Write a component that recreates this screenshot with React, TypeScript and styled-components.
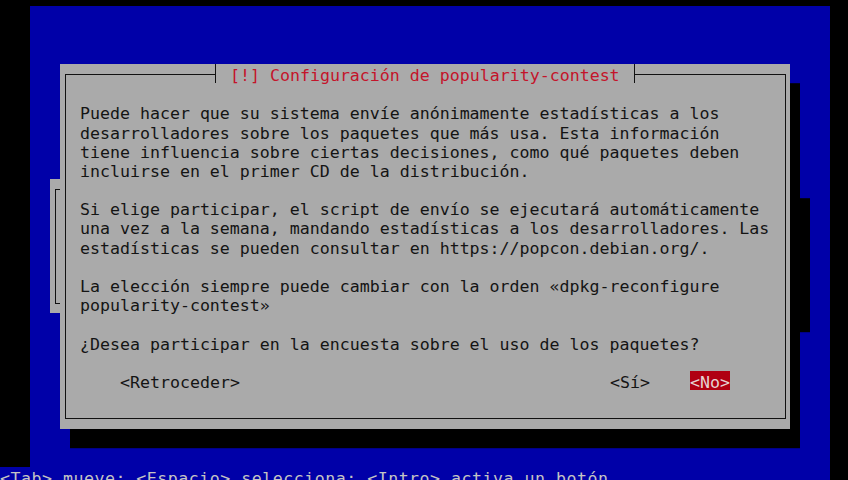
import React from "react";
import styled, { createGlobalStyle } from "styled-components";

const CELL_W = 10;
const CELL_H = 19.2;

const Global = createGlobalStyle`
  html, body {
    margin: 0;
    padding: 0;
    width: 848px;
    height: 480px;
    overflow: hidden;
    background: #000;
  }
`;

const Screen = styled.main`
  margin: 6.4px 0 0 30px;
  width: ${80 * CELL_W}px;
  display: grid;
  grid-template-columns: repeat(80, ${CELL_W}px);
  grid-template-rows: repeat(25, ${CELL_H}px);
  background: #0000a8;
  font-family: "DejaVu Sans Mono", "Liberation Mono", monospace;
  font-size: 16.6px;
  line-height: 23px;
  white-space: pre;
`;

const BackWindow = styled.section`
  grid-column: 3 / 78;
  grid-row: 10 / 17;
  background: #aaaaaa;
  box-shadow: ${CELL_W}px ${CELL_H}px 0 #000;
  padding: ${CELL_H / 2}px 0 ${CELL_H / 2}px 4.5px;
  box-sizing: border-box;
  display: flex;
`;

const BackFrame = styled.div`
  flex: 1;
  border: 1px solid #111;
  border-right: none;
`;

const Dialog = styled.section`
  grid-column: 4 / 77;
  grid-row: 4 / 23;
  background: #aaaaaa;
  box-shadow: ${CELL_W}px ${CELL_H}px 0 #000;
  display: grid;
  grid-template-columns: repeat(73, ${CELL_W}px);
  grid-template-rows: repeat(19, ${CELL_H}px);
`;

const Frame = styled.div`
  grid-column: 1 / -1;
  grid-row: 1 / -1;
  margin: ${CELL_H / 2}px 4.5px;
  border: 1px solid #111;
`;

const Title = styled.h1`
  grid-column: 16 / 59;
  grid-row: 1;
  margin: 0;
  display: flex;
  background: #aaaaaa;
  color: #c4142a;
  font: inherit;
  line-height: 23px;
  z-index: 1;
`;

const Tee = styled.span<{ $side: "left" | "right" }>`
  width: ${CELL_W}px;
  height: ${CELL_H}px;
  position: relative;
  &::before {
    content: "";
    position: absolute;
    left: 4.5px;
    top: 0;
    bottom: 0;
    width: 1px;
    background: #111;
  }
  &::after {
    content: "";
    position: absolute;
    top: ${CELL_H / 2}px;
    height: 1px;
    background: #111;
    ${(p) => (p.$side === "left" ? "left: 0; width: 5px;" : "left: 4.5px; right: 0;")}
  }
`;

const Body = styled.div`
  grid-column: 3 / -2;
  grid-row: 3 / 16;
  color: #141414;
  z-index: 1;
`;

const Paragraph = styled.p`
  margin: 0 0 ${CELL_H}px;
`;

const Line = styled.div`
  height: ${CELL_H}px;
`;

const Question = styled.p`
  grid-column: 3 / -2;
  grid-row: 15;
  margin: 0;
  color: #141414;
  z-index: 1;
`;

const Button = styled.span<{ $col: number; $len: number; $active?: boolean }>`
  grid-row: 17;
  grid-column: ${(p) => p.$col} / span ${(p) => p.$len};
  height: ${CELL_H}px;
  z-index: 1;
  color: ${(p) => (p.$active ? "#e6d2d2" : "#141414")};
  background: ${(p) => (p.$active ? "#b00012" : "transparent")};
`;

const HelpLine = styled.footer`
  grid-column: 1 / -1;
  grid-row: 25;
  margin-left: -30px;
  background: #0000a8;
  color: #c4c4c4;
  letter-spacing: 0.5px;
`;

const paragraphs = [
  [
    "Puede hacer que su sistema envíe anónimamente estadísticas a los",
    "desarrolladores sobre los paquetes que más usa. Esta información",
    "tiene influencia sobre ciertas decisiones, como qué paquetes deben",
    "incluirse en el primer CD de la distribución.",
  ],
  [
    "Si elige participar, el script de envío se ejecutará automáticamente",
    "una vez a la semana, mandando estadísticas a los desarrolladores. Las",
    "estadísticas se pueden consultar en https://popcon.debian.org/.",
  ],
  [
    "La elección siempre puede cambiar con la orden «dpkg-reconfigure",
    "popularity-contest»",
  ],
];

export default function App() {
  return (
    <>
      <Global />
      <Screen>
        <BackWindow>
          <BackFrame />
        </BackWindow>
        <Dialog>
          <Frame />
          <Title>
            <Tee $side="left" />
            {" [!] Configuración de popularity-contest "}
            <Tee $side="right" />
          </Title>
          <Body>
            {paragraphs.map((lines, i) => (
              <Paragraph key={i}>
                {lines.map((l) => (
                  <Line key={l}>{l}</Line>
                ))}
              </Paragraph>
            ))}
          </Body>
          <Question>¿Desea participar en la encuesta sobre el uso de los paquetes?</Question>
          <Button $col={7} $len={12}>{"<Retroceder>"}</Button>
          <Button $col={56} $len={4}>{"<Sí>"}</Button>
          <Button $col={64} $len={4} $active>{"<No>"}</Button>
        </Dialog>
        <HelpLine>{"<Tab> mueve; <Espacio> selecciona; <Intro> activa un botón"}</HelpLine>
      </Screen>
    </>
  );
}
